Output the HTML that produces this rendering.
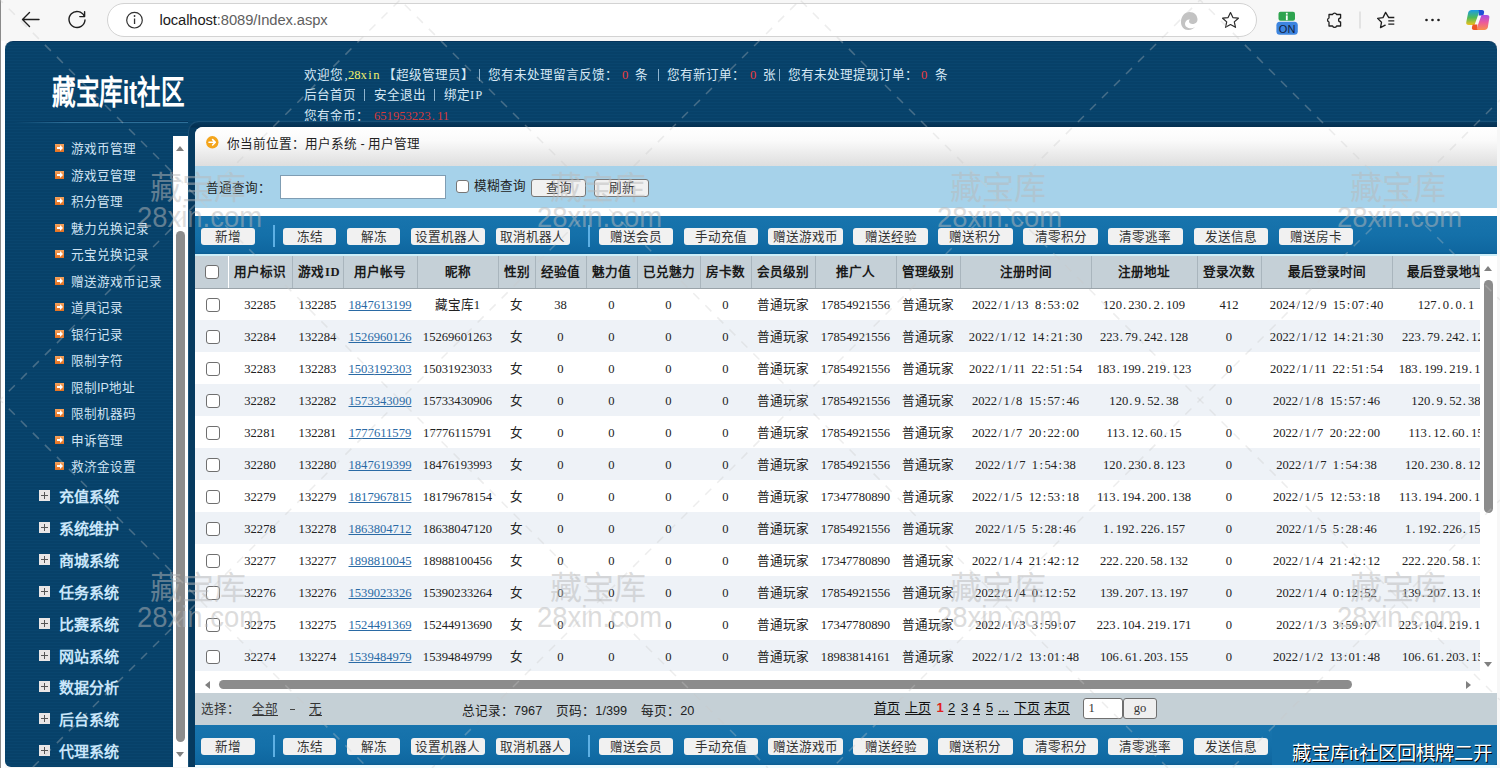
<!DOCTYPE html><html lang="zh-CN"><head><meta charset="utf-8"><style>
*{margin:0;padding:0;box-sizing:border-box}
html,body{width:1500px;height:768px;overflow:hidden;background:#f7f7f7;font-family:'Liberation Sans',sans-serif}
.a{position:absolute;white-space:nowrap}
#frame{left:5px;top:41px;width:1492px;height:726px;border-radius:8px 8px 0 6px;border-top:1px solid #05335a;
 background:repeating-linear-gradient(180deg,#09456e 0px,#09456e 1px,#074169 1px,#074169 3px);}
#panelb{left:188px;top:121px;width:1309px;height:646px;border-radius:10px 0 0 0;background:linear-gradient(180deg,#073d63 0px,#042f50 6px,#063a5f 7px);box-shadow:inset 1px 1px 0 rgba(60,120,160,0.35)}
#panel{left:195px;top:127px;width:1302px;height:641px;border-radius:8px 0 0 0;background:#fff;overflow:hidden}
.p{position:absolute;white-space:nowrap}
.tb{position:absolute;left:0;width:1302px;background:linear-gradient(180deg,#1874ad 0%,#1470a9 50%,#0f67a0 94%,#0c5d92 100%)}
.btn{position:absolute;height:17px;background:#f1f1f1;border-radius:3px;font-size:12.6px;color:#333;text-align:center;line-height:19px;white-space:nowrap}
.sep{position:absolute;width:2px;background:#5eb0e4}
.sb{font-size:12.6px;line-height:13px;color:#cfe3f3}
.ar{position:absolute;width:9px;height:8px;background:linear-gradient(180deg,#f5a25c,#e4701f);}
.ar:after{content:'';position:absolute;left:2px;top:3px;width:3px;height:2px;background:#fff}
.ar:before{content:'';position:absolute;left:5px;top:1px;border-left:3px solid #fff;border-top:3px solid transparent;border-bottom:3px solid transparent}
.gp{font-size:15px;line-height:15px;color:#c9e6fa;font-weight:bold}
.pl{position:absolute;width:11px;height:11px;background:#e9e6e6}
.pl:before{content:"";position:absolute;left:2px;top:5px;width:7px;height:1px;background:#555}
.pl:after{content:"";position:absolute;left:5px;top:2px;width:1px;height:7px;background:#555}
table{border-collapse:collapse;table-layout:fixed;font-size:12.6px;color:#222;font-family:'Liberation Serif',serif;line-height:14px}
td,th{white-space:nowrap;overflow:hidden;text-align:center;padding:0}
th{height:32px;background:#c5d0d7;font-weight:bold;color:#1a1a1a;border-left:1px solid #a9b5bd;border-bottom:1px solid #9aa3a9}
th.f{border-left:none}
th.w{border-left:1px solid #fff}
td{height:32px;padding-top:1px}
tr.e td{background:#eef2f7}
.cb{display:inline-block;width:14px;height:14px;border:1px solid #6f6f6f;border-radius:3px;background:#fff;vertical-align:middle;margin-left:2px}
.lk{color:#2a6aa5;text-decoration:underline}
.wm{position:absolute;color:rgba(120,120,120,0.28);font-weight:bold;text-align:center;pointer-events:none}

.m{font-family:'Liberation Serif',serif}
i{font-style:normal}
i.s{display:inline-block;width:0.5em}
i.d{display:inline-block;width:0.5em;text-align:left;padding-left:0.08em}
i.c{display:inline-block;width:0.5em;text-align:center}
</style></head><body><div class="a" style="left:0;top:0;width:1px;height:768px;background:#8a8a8a"></div><div class="a" style="left:1px;top:41px;width:4px;height:727px;background:#fdfeff"></div><div class="a" style="left:107px;top:3px;width:1150px;height:34px;border-radius:17px;border:1px solid #d3d3d3;background:#fff"></div><div class="a" style="left:159.5px;top:11.5px;font-size:14.75px;line-height:17px;color:#1b1b1b;letter-spacing:-0.1px">localhost<span style="color:#606060">:8089/Index.aspx</span></div><svg class="a" style="left:0;top:0" width="1500" height="41"><path d="M39 19.5H22.5M29.5 12.5L22.5 19.5L29.5 26.5" fill="none" stroke="#1f1f1f" stroke-width="1.4" stroke-linecap="round" stroke-linejoin="round"/><path d="M84.3 16.2A8 8 0 1 0 85 20" fill="none" stroke="#1f1f1f" stroke-width="1.4" stroke-linecap="round"/><path d="M84.6 11.8V16.6H79.8" fill="none" stroke="#1f1f1f" stroke-width="1.4" stroke-linecap="round" stroke-linejoin="round"/><circle cx="134.5" cy="20.2" r="7.8" fill="none" stroke="#333" stroke-width="1.2"/><rect x="133.9" y="18.5" width="1.3" height="5.5" fill="#333"/><circle cx="134.55" cy="16" r="0.9" fill="#333"/><path d="M1181 22c0-6 4-10 8.5-10 5 0 8 3.5 8 7.5 0 3-2.5 4.5-5 4.5-2 0-3.5-1-3.5-2.5 0-1 .6-1.6 1-2-2.5-.5-5 1.6-5 4.3 0 2.8 2.6 4.5 5.6 4.5 1.6 0 3.2-.5 4.5-1.5-1.3 2-3.7 3.2-6.7 3.2-4.5 0-7.4-3.5-7.4-8z" fill="#c3c3c3"/><path d="M1230.5 12.5l2.4 5.1 5.5.6-4.1 3.7 1.2 5.4-5-2.8-5 2.8 1.2-5.4-4.1-3.7 5.5-.6z" fill="none" stroke="#2b2b2b" stroke-width="1.2" stroke-linejoin="round"/><rect x="1278.5" y="11.8" width="16.5" height="9" rx="2" fill="#2ea44f"/><rect x="1285.9" y="12.8" width="1.8" height="1.8" fill="#fff"/><rect x="1285.9" y="15.4" width="1.8" height="4.8" fill="#fff"/><rect x="1276.4" y="21.8" width="21.4" height="13" rx="3.5" fill="#3d85e0"/><text x="1287.1" y="32.6" font-family="Liberation Sans" font-size="11" text-anchor="middle" fill="#102040">ON</text><path d="M1329 14.5H1332.6A2.1 2.1 0 0 1 1336.6 14.5H1340.6V18A2 2 0 0 0 1340.6 22V26H1336.6A2.1 2.1 0 0 1 1332.6 26H1329V22A2.1 2.1 0 0 1 1329 18Z" fill="none" stroke="#1f1f1f" stroke-width="1.3" stroke-linejoin="round"/><rect x="1359.5" y="11.5" width="1" height="17" fill="#d0d0d0"/><path d="M1388.6 17.3L1385.6 12.4L1383 17.6L1377.6 18.4L1381.5 22.3L1380.5 27.6L1385.2 25.2" fill="none" stroke="#1f1f1f" stroke-width="1.3" stroke-linejoin="round" stroke-linecap="round"/><path d="M1388.3 17.5h6M1388.3 20.8h6M1388.3 24.1h6" stroke="#1f1f1f" stroke-width="1.3"/><circle cx="1426.5" cy="20" r="1.3" fill="#1f1f1f"/><circle cx="1432.5" cy="20" r="1.3" fill="#1f1f1f"/><circle cx="1438.5" cy="20" r="1.3" fill="#1f1f1f"/><defs><linearGradient id="cg1" x1="0" y1="0" x2="0" y2="1"><stop offset="0" stop-color="#1a9be8"/><stop offset="0.5" stop-color="#4dba5a"/><stop offset="1" stop-color="#f1c21b"/></linearGradient><linearGradient id="cg2" x1="0" y1="0" x2="0" y2="1"><stop offset="0" stop-color="#a64de6"/><stop offset="0.5" stop-color="#ec5a9a"/><stop offset="1" stop-color="#f9904a"/></linearGradient></defs><path d="M1466.3 22C1465.8 24 1466.8 25 1468.8 25L1474.5 25L1479 12.5C1479.6 11 1480.5 10 1482 10L1471.5 10C1469.8 10 1468.7 11 1468.2 12.5Z" fill="url(#cg1)"/><path d="M1478 10L1482 10C1483.5 10 1484.5 11.3 1484 13L1483.3 15.5L1478.6 15.5L1479 12.5C1479.3 11.3 1478.8 10.3 1478 10Z" fill="#1f4fd6"/><path d="M1489.3 18C1489.8 16 1488.8 15 1486.8 15L1481.5 15L1477 27.5C1476.4 29 1475.5 30 1474 30L1484.5 30C1486.2 30 1487.3 29 1487.8 27.5Z" fill="url(#cg2)"/><path d="M1478 30L1474 30C1472.5 30 1471.5 28.7 1472 27L1472.7 24.5L1477.4 24.5L1477 27.5C1476.7 28.7 1477.2 29.7 1478 30Z" fill="#ee5526"/></svg><div id="frame" class="a"></div><div class="a" style="left:52px;top:76px;font-size:33px;line-height:33px;font-weight:bold;color:#fff;transform:scaleX(0.715);transform-origin:0 0">藏宝库it社区</div><div class="a" style="left:304px;top:69px;font-size:12.6px;line-height:13px;color:#d6e8f5">欢迎您<i class="c m">,</i></div><div class="a m" style="left:348px;top:69px;font-size:12.6px;line-height:13px;color:#d6e8f5;color:#f2f06a">28<i class="c">x</i><i class="c">i</i><i class="c">n</i></div><div class="a" style="left:383px;top:69px;font-size:12.6px;line-height:13px;color:#d6e8f5">【超级管理员】</div><div class="a" style="left:478.5px;top:69px;width:1px;height:12px;background:#8fb4cf"></div><div class="a" style="left:488px;top:69px;font-size:12.6px;line-height:13px;color:#d6e8f5">您有未处理留言反馈：</div><div class="a" style="left:635px;top:69px;font-size:12.6px;line-height:13px;color:#d6e8f5">条</div><div class="a" style="left:667px;top:69px;font-size:12.6px;line-height:13px;color:#d6e8f5">您有新订单：</div><div class="a" style="left:763px;top:69px;font-size:12.6px;line-height:13px;color:#d6e8f5">张</div><div class="a" style="left:788px;top:69px;font-size:12.6px;line-height:13px;color:#d6e8f5">您有未处理提现订单：</div><div class="a" style="left:935px;top:69px;font-size:12.6px;line-height:13px;color:#d6e8f5">条</div><div class="a m" style="left:622px;top:69px;font-size:12.6px;line-height:13px;color:#d6e8f5;color:#ef3d3d">0</div><div class="a m" style="left:750px;top:69px;font-size:12.6px;line-height:13px;color:#d6e8f5;color:#ef3d3d">0</div><div class="a m" style="left:921px;top:69px;font-size:12.6px;line-height:13px;color:#d6e8f5;color:#ef3d3d">0</div><div class="a" style="left:657.5px;top:69px;width:1px;height:12px;background:#8fb4cf"></div><div class="a" style="left:778.5px;top:69px;width:1px;height:12px;background:#8fb4cf"></div><div class="a" style="left:304px;top:89px;font-size:12.6px;line-height:13px;color:#d6e8f5">后台首页</div><div class="a" style="left:374px;top:89px;font-size:12.6px;line-height:13px;color:#d6e8f5">安全退出</div><div class="a" style="left:444px;top:89px;font-size:12.6px;line-height:13px;color:#d6e8f5">绑定</div><div class="a m" style="left:469px;top:89px;font-size:12.6px;line-height:13px;color:#d6e8f5"><i class="c">I</i><i class="c">P</i></div><div class="a" style="left:364px;top:89px;width:1px;height:12px;background:#8fb4cf"></div><div class="a" style="left:434px;top:89px;width:1px;height:12px;background:#8fb4cf"></div><div class="a" style="left:304px;top:110px;font-size:12.6px;line-height:13px;color:#d6e8f5">您有金币：</div><div class="a m" style="left:374px;top:110px;font-size:12.6px;line-height:13px;color:#d6e8f5;color:#d83a3a">651953223<i class="d">.</i>11</div><div class="a" style="left:15px;top:121px;width:173px;height:1px;background:linear-gradient(90deg,rgba(4,50,85,0),#05355c 25%)"></div><div class="a" style="left:15px;top:122px;width:173px;height:1px;background:linear-gradient(90deg,rgba(43,109,150,0),#2d6e97 30%)"></div><div class="ar" style="left:55px;top:144.0px"></div><div class="a sb" style="left:71px;top:143.0px">游戏币管理</div><div class="ar" style="left:55px;top:170.5px"></div><div class="a sb" style="left:71px;top:169.5px">游戏豆管理</div><div class="ar" style="left:55px;top:197.0px"></div><div class="a sb" style="left:71px;top:196.0px">积分管理</div><div class="ar" style="left:55px;top:223.5px"></div><div class="a sb" style="left:71px;top:222.5px">魅力兑换记录</div><div class="ar" style="left:55px;top:250.0px"></div><div class="a sb" style="left:71px;top:249.0px">元宝兑换记录</div><div class="ar" style="left:55px;top:276.5px"></div><div class="a sb" style="left:71px;top:275.5px">赠送游戏币记录</div><div class="ar" style="left:55px;top:303.0px"></div><div class="a sb" style="left:71px;top:302.0px">道具记录</div><div class="ar" style="left:55px;top:329.5px"></div><div class="a sb" style="left:71px;top:328.5px">银行记录</div><div class="ar" style="left:55px;top:356.0px"></div><div class="a sb" style="left:71px;top:355.0px">限制字符</div><div class="ar" style="left:55px;top:382.5px"></div><div class="a sb" style="left:71px;top:381.5px">限制IP地址</div><div class="ar" style="left:55px;top:409.0px"></div><div class="a sb" style="left:71px;top:408.0px">限制机器码</div><div class="ar" style="left:55px;top:435.5px"></div><div class="a sb" style="left:71px;top:434.5px">申诉管理</div><div class="ar" style="left:55px;top:462.0px"></div><div class="a sb" style="left:71px;top:461.0px">救济金设置</div><div class="pl" style="left:39px;top:490.0px"></div><div class="a gp" style="left:59px;top:489.0px">充值系统</div><div class="pl" style="left:39px;top:521.9px"></div><div class="a gp" style="left:59px;top:520.9px">系统维护</div><div class="pl" style="left:39px;top:553.8px"></div><div class="a gp" style="left:59px;top:552.8px">商城系统</div><div class="pl" style="left:39px;top:585.7px"></div><div class="a gp" style="left:59px;top:584.7px">任务系统</div><div class="pl" style="left:39px;top:617.6px"></div><div class="a gp" style="left:59px;top:616.6px">比赛系统</div><div class="pl" style="left:39px;top:649.5px"></div><div class="a gp" style="left:59px;top:648.5px">网站系统</div><div class="pl" style="left:39px;top:681.4px"></div><div class="a gp" style="left:59px;top:680.4px">数据分析</div><div class="pl" style="left:39px;top:713.3px"></div><div class="a gp" style="left:59px;top:712.3px">后台系统</div><div class="pl" style="left:39px;top:745.2px"></div><div class="a gp" style="left:59px;top:744.2px">代理系统</div><div class="a" style="left:173px;top:136px;width:15px;height:631px;background:#fff"></div><div class="a" style="left:176px;top:231px;width:9px;height:511px;border-radius:5px;background:#8c8c8c"></div><div class="a" style="left:176px;top:146px;width:0;height:0;border-left:4.5px solid transparent;border-right:4.5px solid transparent;border-bottom:5px solid #808080"></div><div class="a" style="left:176px;top:752px;width:0;height:0;border-left:4.5px solid transparent;border-right:4.5px solid transparent;border-top:5px solid #808080"></div><div id="panelb" class="a"></div><div id="panel" class="a"><div class="p" style="left:0;top:0;width:1302px;height:39px;background:linear-gradient(180deg,#ffffff 0%,#fafafa 35%,#dedede 100%)"></div><svg class="p" style="left:11px;top:9px" width="13" height="13"><circle cx="6.3" cy="6.3" r="6.2" fill="#f4a51c"/><path d="M3 6.3H9M6.6 3.6L9.3 6.3L6.6 9" fill="none" stroke="#fff" stroke-width="1.6" stroke-linecap="round" stroke-linejoin="round"/></svg><div class="p" style="left:32px;top:11px;font-size:12.6px;line-height:13px;color:#222">你当前位置：用户系统 - 用户管理</div><div class="p" style="left:0;top:39px;width:1302px;height:42px;background:#a6d2ea"></div><div class="p" style="left:11px;top:55px;font-size:12.6px;line-height:13px;color:#222">普通查询：</div><div class="p" style="left:85px;top:48px;width:166px;height:24px;background:#fff;border:1px solid #7f9db3"></div><div class="p" style="left:261px;top:53px;width:13px;height:13px;border:1px solid #767676;border-radius:3px;background:#fff"></div><div class="p" style="left:279px;top:52.5px;font-size:12.6px;line-height:13px;color:#222">模糊查询</div><div class="btn" style="left:336px;top:52px;width:55px;height:18px;border:1px solid #777;line-height:16px">查询</div><div class="btn" style="left:399px;top:52px;width:55px;height:18px;border:1px solid #777;line-height:16px">刷新</div><div class="tb" style="top:89px;height:38px"></div><div class="btn" style="left:6.0px;top:101px;width:53.5px">新增</div><div class="btn" style="left:88.0px;top:101px;width:53.0px">冻结</div><div class="btn" style="left:152.0px;top:101px;width:53.0px">解冻</div><div class="btn" style="left:215.5px;top:101px;width:74.5px">设置机器人</div><div class="btn" style="left:300.5px;top:101px;width:74.5px">取消机器人</div><div class="btn" style="left:403.7px;top:101px;width:74.6px">赠送会员</div><div class="btn" style="left:488.5px;top:101px;width:74.5px">手动充值</div><div class="btn" style="left:573.3px;top:101px;width:74.7px">赠送游戏币</div><div class="btn" style="left:658.3px;top:101px;width:74.7px">赠送经验</div><div class="btn" style="left:743.0px;top:101px;width:74.7px">赠送积分</div><div class="btn" style="left:828.3px;top:101px;width:74.7px">清零积分</div><div class="btn" style="left:913.0px;top:101px;width:74.8px">清零逃率</div><div class="btn" style="left:998.5px;top:101px;width:74.5px">发送信息</div><div class="btn" style="left:1083.5px;top:101px;width:74.5px">赠送房卡</div><div class="sep" style="left:78px;top:98px;height:22px"></div><div class="sep" style="left:393px;top:98px;height:22px"></div><div class="p" style="left:0;top:127px;width:1302px;height:2px;background:#cdeef8"></div><div class="p" style="left:0;top:129px;width:1285px;height:416px;overflow:hidden"><table style="width:1305px"><colgroup><col style="width:33px"><col style="width:64px"><col style="width:51px"><col style="width:74px"><col style="width:81px"><col style="width:37px"><col style="width:51px"><col style="width:51px"><col style="width:63px"><col style="width:51px"><col style="width:64px"><col style="width:81px"><col style="width:64px"><col style="width:131px"><col style="width:106px"><col style="width:64px"><col style="width:131px"><col style="width:108px"></colgroup><tr><th class="f"><span class="cb"></span></th><th class="w">用户标识</th><th class="">游戏<i class="c">I</i><i class="c">D</i></th><th class="">用户帐号</th><th class="">昵称</th><th class="">性别</th><th class="">经验值</th><th class="">魅力值</th><th class="">已兑魅力</th><th class="">房卡数</th><th class="">会员级别</th><th class="">推广人</th><th class="">管理级别</th><th class="">注册时间</th><th class="">注册地址</th><th class="">登录次数</th><th class="">最后登录时间</th><th class="">最后登录地址</th></tr><tr><td><span class="cb"></span></td><td>32285</td><td>132285</td><td><span class="lk">1847613199</span></td><td>藏宝库1</td><td>女</td><td>38</td><td>0</td><td>0</td><td>0</td><td>普通玩家</td><td>17854921556</td><td>普通玩家</td><td>2022<i class="c">/</i>1<i class="c">/</i>13<i class="s"></i>8<i class="c">:</i>53<i class="c">:</i>02</td><td>120<i class="d">.</i>230<i class="d">.</i>2<i class="d">.</i>109</td><td>412</td><td>2024<i class="c">/</i>12<i class="c">/</i>9<i class="s"></i>15<i class="c">:</i>07<i class="c">:</i>40</td><td>127<i class="d">.</i>0<i class="d">.</i>0<i class="d">.</i>1</td></tr><tr class="e"><td><span class="cb"></span></td><td>32284</td><td>132284</td><td><span class="lk">1526960126</span></td><td>15269601263</td><td>女</td><td>0</td><td>0</td><td>0</td><td>0</td><td>普通玩家</td><td>17854921556</td><td>普通玩家</td><td>2022<i class="c">/</i>1<i class="c">/</i>12<i class="s"></i>14<i class="c">:</i>21<i class="c">:</i>30</td><td>223<i class="d">.</i>79<i class="d">.</i>242<i class="d">.</i>128</td><td>0</td><td>2022<i class="c">/</i>1<i class="c">/</i>12<i class="s"></i>14<i class="c">:</i>21<i class="c">:</i>30</td><td>223<i class="d">.</i>79<i class="d">.</i>242<i class="d">.</i>128</td></tr><tr><td><span class="cb"></span></td><td>32283</td><td>132283</td><td><span class="lk">1503192303</span></td><td>15031923033</td><td>女</td><td>0</td><td>0</td><td>0</td><td>0</td><td>普通玩家</td><td>17854921556</td><td>普通玩家</td><td>2022<i class="c">/</i>1<i class="c">/</i>11<i class="s"></i>22<i class="c">:</i>51<i class="c">:</i>54</td><td>183<i class="d">.</i>199<i class="d">.</i>219<i class="d">.</i>123</td><td>0</td><td>2022<i class="c">/</i>1<i class="c">/</i>11<i class="s"></i>22<i class="c">:</i>51<i class="c">:</i>54</td><td>183<i class="d">.</i>199<i class="d">.</i>219<i class="d">.</i>123</td></tr><tr class="e"><td><span class="cb"></span></td><td>32282</td><td>132282</td><td><span class="lk">1573343090</span></td><td>15733430906</td><td>女</td><td>0</td><td>0</td><td>0</td><td>0</td><td>普通玩家</td><td>17854921556</td><td>普通玩家</td><td>2022<i class="c">/</i>1<i class="c">/</i>8<i class="s"></i>15<i class="c">:</i>57<i class="c">:</i>46</td><td>120<i class="d">.</i>9<i class="d">.</i>52<i class="d">.</i>38</td><td>0</td><td>2022<i class="c">/</i>1<i class="c">/</i>8<i class="s"></i>15<i class="c">:</i>57<i class="c">:</i>46</td><td>120<i class="d">.</i>9<i class="d">.</i>52<i class="d">.</i>38</td></tr><tr><td><span class="cb"></span></td><td>32281</td><td>132281</td><td><span class="lk">1777611579</span></td><td>17776115791</td><td>女</td><td>0</td><td>0</td><td>0</td><td>0</td><td>普通玩家</td><td>17854921556</td><td>普通玩家</td><td>2022<i class="c">/</i>1<i class="c">/</i>7<i class="s"></i>20<i class="c">:</i>22<i class="c">:</i>00</td><td>113<i class="d">.</i>12<i class="d">.</i>60<i class="d">.</i>15</td><td>0</td><td>2022<i class="c">/</i>1<i class="c">/</i>7<i class="s"></i>20<i class="c">:</i>22<i class="c">:</i>00</td><td>113<i class="d">.</i>12<i class="d">.</i>60<i class="d">.</i>15</td></tr><tr class="e"><td><span class="cb"></span></td><td>32280</td><td>132280</td><td><span class="lk">1847619399</span></td><td>18476193993</td><td>女</td><td>0</td><td>0</td><td>0</td><td>0</td><td>普通玩家</td><td>17854921556</td><td>普通玩家</td><td>2022<i class="c">/</i>1<i class="c">/</i>7<i class="s"></i>1<i class="c">:</i>54<i class="c">:</i>38</td><td>120<i class="d">.</i>230<i class="d">.</i>8<i class="d">.</i>123</td><td>0</td><td>2022<i class="c">/</i>1<i class="c">/</i>7<i class="s"></i>1<i class="c">:</i>54<i class="c">:</i>38</td><td>120<i class="d">.</i>230<i class="d">.</i>8<i class="d">.</i>123</td></tr><tr><td><span class="cb"></span></td><td>32279</td><td>132279</td><td><span class="lk">1817967815</span></td><td>18179678154</td><td>女</td><td>0</td><td>0</td><td>0</td><td>0</td><td>普通玩家</td><td>17347780890</td><td>普通玩家</td><td>2022<i class="c">/</i>1<i class="c">/</i>5<i class="s"></i>12<i class="c">:</i>53<i class="c">:</i>18</td><td>113<i class="d">.</i>194<i class="d">.</i>200<i class="d">.</i>138</td><td>0</td><td>2022<i class="c">/</i>1<i class="c">/</i>5<i class="s"></i>12<i class="c">:</i>53<i class="c">:</i>18</td><td>113<i class="d">.</i>194<i class="d">.</i>200<i class="d">.</i>138</td></tr><tr class="e"><td><span class="cb"></span></td><td>32278</td><td>132278</td><td><span class="lk">1863804712</span></td><td>18638047120</td><td>女</td><td>0</td><td>0</td><td>0</td><td>0</td><td>普通玩家</td><td>17854921556</td><td>普通玩家</td><td>2022<i class="c">/</i>1<i class="c">/</i>5<i class="s"></i>5<i class="c">:</i>28<i class="c">:</i>46</td><td>1<i class="d">.</i>192<i class="d">.</i>226<i class="d">.</i>157</td><td>0</td><td>2022<i class="c">/</i>1<i class="c">/</i>5<i class="s"></i>5<i class="c">:</i>28<i class="c">:</i>46</td><td>1<i class="d">.</i>192<i class="d">.</i>226<i class="d">.</i>157</td></tr><tr><td><span class="cb"></span></td><td>32277</td><td>132277</td><td><span class="lk">1898810045</span></td><td>18988100456</td><td>女</td><td>0</td><td>0</td><td>0</td><td>0</td><td>普通玩家</td><td>17347780890</td><td>普通玩家</td><td>2022<i class="c">/</i>1<i class="c">/</i>4<i class="s"></i>21<i class="c">:</i>42<i class="c">:</i>12</td><td>222<i class="d">.</i>220<i class="d">.</i>58<i class="d">.</i>132</td><td>0</td><td>2022<i class="c">/</i>1<i class="c">/</i>4<i class="s"></i>21<i class="c">:</i>42<i class="c">:</i>12</td><td>222<i class="d">.</i>220<i class="d">.</i>58<i class="d">.</i>132</td></tr><tr class="e"><td><span class="cb"></span></td><td>32276</td><td>132276</td><td><span class="lk">1539023326</span></td><td>15390233264</td><td>女</td><td>0</td><td>0</td><td>0</td><td>0</td><td>普通玩家</td><td>17854921556</td><td>普通玩家</td><td>2022<i class="c">/</i>1<i class="c">/</i>4<i class="s"></i>0<i class="c">:</i>12<i class="c">:</i>52</td><td>139<i class="d">.</i>207<i class="d">.</i>13<i class="d">.</i>197</td><td>0</td><td>2022<i class="c">/</i>1<i class="c">/</i>4<i class="s"></i>0<i class="c">:</i>12<i class="c">:</i>52</td><td>139<i class="d">.</i>207<i class="d">.</i>13<i class="d">.</i>197</td></tr><tr><td><span class="cb"></span></td><td>32275</td><td>132275</td><td><span class="lk">1524491369</span></td><td>15244913690</td><td>女</td><td>0</td><td>0</td><td>0</td><td>0</td><td>普通玩家</td><td>17347780890</td><td>普通玩家</td><td>2022<i class="c">/</i>1<i class="c">/</i>3<i class="s"></i>3<i class="c">:</i>59<i class="c">:</i>07</td><td>223<i class="d">.</i>104<i class="d">.</i>219<i class="d">.</i>171</td><td>0</td><td>2022<i class="c">/</i>1<i class="c">/</i>3<i class="s"></i>3<i class="c">:</i>59<i class="c">:</i>07</td><td>223<i class="d">.</i>104<i class="d">.</i>219<i class="d">.</i>171</td></tr><tr class="e"><td><span class="cb"></span></td><td>32274</td><td>132274</td><td><span class="lk">1539484979</span></td><td>15394849799</td><td>女</td><td>0</td><td>0</td><td>0</td><td>0</td><td>普通玩家</td><td>18983814161</td><td>普通玩家</td><td>2022<i class="c">/</i>1<i class="c">/</i>2<i class="s"></i>13<i class="c">:</i>01<i class="c">:</i>48</td><td>106<i class="d">.</i>61<i class="d">.</i>203<i class="d">.</i>155</td><td>0</td><td>2022<i class="c">/</i>1<i class="c">/</i>2<i class="s"></i>13<i class="c">:</i>01<i class="c">:</i>48</td><td>106<i class="d">.</i>61<i class="d">.</i>203<i class="d">.</i>155</td></tr></table></div><div class="p" style="left:1285px;top:129px;width:17px;height:437px;background:#fff"></div><div class="p" style="left:1289px;top:153px;width:9px;height:233px;border-radius:5px;background:#8c8c8c"></div><div class="p" style="left:1289px;top:139px;width:0;height:0;border-left:4.5px solid transparent;border-right:4.5px solid transparent;border-bottom:5px solid #808080"></div><div class="p" style="left:1289px;top:535px;width:0;height:0;border-left:4.5px solid transparent;border-right:4.5px solid transparent;border-top:5px solid #808080"></div><div class="p" style="left:0;top:544px;width:1285px;height:22px;background:#fff"></div><div class="p" style="left:24px;top:553px;width:1133px;height:9px;border-radius:5px;background:#8c8c8c"></div><div class="p" style="left:10px;top:553.5px;width:0;height:0;border-top:4px solid transparent;border-bottom:4px solid transparent;border-right:5px solid #808080"></div><div class="p" style="left:1271px;top:553.5px;width:0;height:0;border-top:4px solid transparent;border-bottom:4px solid transparent;border-left:5px solid #808080"></div><div class="p" style="left:0;top:566px;width:1302px;height:32px;background:#c5d0d6"></div><div class="p" style="left:6px;top:576px;font-size:12.6px;line-height:13px;color:#333">选择：</div><div class="p" style="left:56.5px;top:576px;font-size:12.6px;line-height:13px;color:#333;border-bottom:1px solid #333;height:13px">全部</div><div class="p" style="left:95px;top:582px;width:5px;height:1px;background:#444"></div><div class="p" style="left:114px;top:576px;font-size:12.6px;line-height:13px;color:#333;border-bottom:1px solid #333;height:13px">无</div><div class="p" style="left:267px;top:578px;font-size:12.7px;line-height:13px;color:#222">总记录：7967&nbsp;&nbsp;&nbsp; 页码：1/399&nbsp;&nbsp;&nbsp; 每页：20</div><div class="p" style="left:679.0px;top:574px;height:14px;font-size:13px;line-height:13px;color:#111;border-bottom:1.5px solid #111;">首页</div><div class="p" style="left:710.0px;top:574px;height:14px;font-size:13px;line-height:13px;color:#111;border-bottom:1.5px solid #111;">上页</div><div class="p" style="left:741.6px;top:574px;height:14px;font-size:13px;line-height:13px;color:#111;"><b style="color:#e02020">1</b></div><div class="p" style="left:753.0px;top:574px;height:14px;font-size:13px;line-height:13px;color:#111;border-bottom:1.5px solid #111;">2</div><div class="p" style="left:766.0px;top:574px;height:14px;font-size:13px;line-height:13px;color:#111;border-bottom:1.5px solid #111;">3</div><div class="p" style="left:778.0px;top:574px;height:14px;font-size:13px;line-height:13px;color:#111;border-bottom:1.5px solid #111;">4</div><div class="p" style="left:791.0px;top:574px;height:14px;font-size:13px;line-height:13px;color:#111;border-bottom:1.5px solid #111;">5</div><div class="p" style="left:803.0px;top:574px;height:14px;font-size:13px;line-height:13px;color:#111;border-bottom:1.5px solid #111;">...</div><div class="p" style="left:819.0px;top:574px;height:14px;font-size:13px;line-height:13px;color:#111;border-bottom:1.5px solid #111;">下页</div><div class="p" style="left:849.4px;top:574px;height:14px;font-size:13px;line-height:13px;color:#111;border-bottom:1.5px solid #111;">末页</div><div class="p" style="left:887.5px;top:571px;width:40px;height:21px;background:#fff;border:1px solid #6f6f6f;border-radius:3px;font-size:12.6px;line-height:19px;padding-left:5px;color:#333;font-family:Liberation Serif,serif">1</div><div class="p" style="left:928px;top:571px;width:34px;height:21px;background:#efefef;border:1px solid #6f6f6f;border-radius:3px;font-size:12.6px;line-height:18px;text-align:center;color:#333;font-family:Liberation Serif,serif">go</div><div class="tb" style="top:598px;height:40px"></div><div class="btn" style="left:6.0px;top:611px;width:53.5px">新增</div><div class="btn" style="left:88.0px;top:611px;width:53.0px">冻结</div><div class="btn" style="left:152.0px;top:611px;width:53.0px">解冻</div><div class="btn" style="left:215.5px;top:611px;width:74.5px">设置机器人</div><div class="btn" style="left:300.5px;top:611px;width:74.5px">取消机器人</div><div class="btn" style="left:403.7px;top:611px;width:74.6px">赠送会员</div><div class="btn" style="left:488.5px;top:611px;width:74.5px">手动充值</div><div class="btn" style="left:573.3px;top:611px;width:74.7px">赠送游戏币</div><div class="btn" style="left:658.3px;top:611px;width:74.7px">赠送经验</div><div class="btn" style="left:743.0px;top:611px;width:74.7px">赠送积分</div><div class="btn" style="left:828.3px;top:611px;width:74.7px">清零积分</div><div class="btn" style="left:913.0px;top:611px;width:74.8px">清零逃率</div><div class="btn" style="left:998.5px;top:611px;width:74.5px">发送信息</div><div class="btn" style="left:1083.5px;top:611px;width:74.5px">赠送房卡</div><div class="sep" style="left:78px;top:608px;height:22px"></div><div class="sep" style="left:393px;top:608px;height:22px"></div><div class="p" style="left:0;top:638px;width:1302px;height:3px;background:#effbff"></div></div><div class="a" style="left:1272px;top:726px;width:225px;height:39px;background:#1470a9;border-radius:0 0 4px 0"></div><div class="a" style="left:1292px;top:744px;font-size:19.2px;line-height:19px;color:#fff;text-shadow:1px 1px 0 #000">藏宝库it社区回棋牌二开</div><svg class="a" style="left:0;top:0;pointer-events:none" width="1500" height="768"><g fill="none" stroke="rgba(200,200,200,0.33)" stroke-width="1.5" stroke-dasharray="8.5 8.5"><path d="M1200 0L1500 300" stroke-dashoffset="4.53"/><path d="M800 0L1500 700" stroke-dashoffset="15.84"/><path d="M400 0L1168 768" stroke-dashoffset="10.18"/><path d="M0 0L768 768" stroke-dashoffset="4.53"/><path d="M0 400L368 768" stroke-dashoffset="4.53"/><path d="M0 400L400 0" stroke-dashoffset="4.53"/><path d="M32 768L800 0" stroke-dashoffset="15.84"/><path d="M432 768L1200 0" stroke-dashoffset="4.53"/><path d="M832 768L1500 100" stroke-dashoffset="10.18"/><path d="M1232 768L1500 500" stroke-dashoffset="15.84"/></g></svg><div class="a" style="left:150px;top:172px;font-size:32px;line-height:32px;font-weight:300;color:rgba(185,185,185,0.5);pointer-events:none">藏宝库</div><div class="a" style="left:136.7px;top:202px;font-size:30px;line-height:30px;color:rgba(185,185,185,0.5);transform:scaleX(0.915);transform-origin:0 0;pointer-events:none">28xin.com</div><div class="a" style="left:150px;top:572px;font-size:32px;line-height:32px;font-weight:300;color:rgba(185,185,185,0.5);pointer-events:none">藏宝库</div><div class="a" style="left:136.7px;top:602px;font-size:30px;line-height:30px;color:rgba(185,185,185,0.5);transform:scaleX(0.915);transform-origin:0 0;pointer-events:none">28xin.com</div><div class="a" style="left:550px;top:172px;font-size:32px;line-height:32px;font-weight:300;color:rgba(185,185,185,0.5);pointer-events:none">藏宝库</div><div class="a" style="left:536.7px;top:202px;font-size:30px;line-height:30px;color:rgba(185,185,185,0.5);transform:scaleX(0.915);transform-origin:0 0;pointer-events:none">28xin.com</div><div class="a" style="left:550px;top:572px;font-size:32px;line-height:32px;font-weight:300;color:rgba(185,185,185,0.5);pointer-events:none">藏宝库</div><div class="a" style="left:536.7px;top:602px;font-size:30px;line-height:30px;color:rgba(185,185,185,0.5);transform:scaleX(0.915);transform-origin:0 0;pointer-events:none">28xin.com</div><div class="a" style="left:950px;top:172px;font-size:32px;line-height:32px;font-weight:300;color:rgba(185,185,185,0.5);pointer-events:none">藏宝库</div><div class="a" style="left:936.7px;top:202px;font-size:30px;line-height:30px;color:rgba(185,185,185,0.5);transform:scaleX(0.915);transform-origin:0 0;pointer-events:none">28xin.com</div><div class="a" style="left:950px;top:572px;font-size:32px;line-height:32px;font-weight:300;color:rgba(185,185,185,0.5);pointer-events:none">藏宝库</div><div class="a" style="left:936.7px;top:602px;font-size:30px;line-height:30px;color:rgba(185,185,185,0.5);transform:scaleX(0.915);transform-origin:0 0;pointer-events:none">28xin.com</div><div class="a" style="left:1350px;top:172px;font-size:32px;line-height:32px;font-weight:300;color:rgba(185,185,185,0.5);pointer-events:none">藏宝库</div><div class="a" style="left:1336.7px;top:202px;font-size:30px;line-height:30px;color:rgba(185,185,185,0.5);transform:scaleX(0.915);transform-origin:0 0;pointer-events:none">28xin.com</div><div class="a" style="left:1350px;top:572px;font-size:32px;line-height:32px;font-weight:300;color:rgba(185,185,185,0.5);pointer-events:none">藏宝库</div><div class="a" style="left:1336.7px;top:602px;font-size:30px;line-height:30px;color:rgba(185,185,185,0.5);transform:scaleX(0.915);transform-origin:0 0;pointer-events:none">28xin.com</div></body></html>
